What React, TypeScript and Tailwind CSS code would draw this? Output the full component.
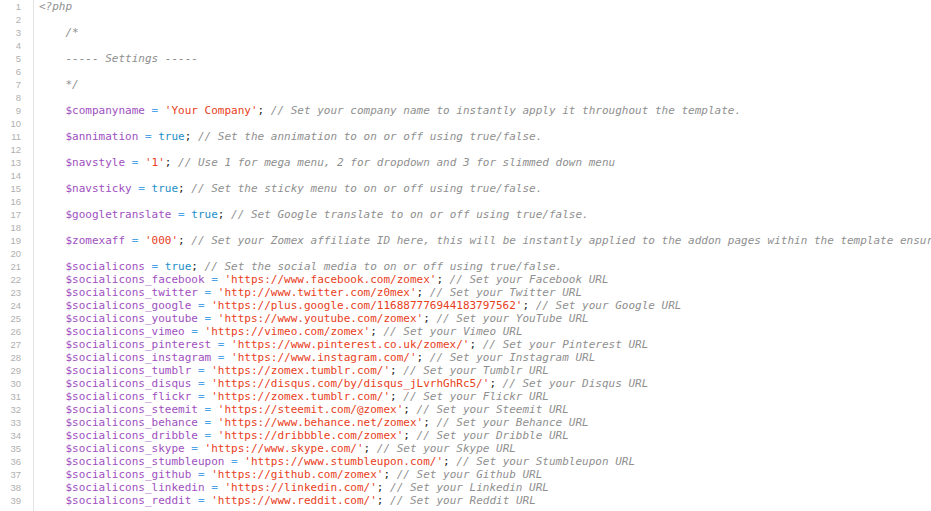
type Line = { v?: string; val?: string; kind?: "str" | "bool"; c?: string; raw?: string; rawComment?: boolean };

const lines: Line[] = [
  { raw: "<?php", rawComment: true },
  {},
  { raw: "    /*", rawComment: true },
  {},
  { raw: "    ----- Settings -----", rawComment: true },
  {},
  { raw: "    */", rawComment: true },
  {},
  { v: "$companyname", val: "'Your Company'", kind: "str", c: "Set your company name to instantly apply it throughout the template." },
  {},
  { v: "$annimation", val: "true", kind: "bool", c: "Set the annimation to on or off using true/false." },
  {},
  { v: "$navstyle", val: "'1'", kind: "str", c: "Use 1 for mega menu, 2 for dropdown and 3 for slimmed down menu" },
  {},
  { v: "$navsticky", val: "true", kind: "bool", c: "Set the sticky menu to on or off using true/false." },
  {},
  { v: "$googletranslate", val: "true", kind: "bool", c: "Set Google translate to on or off using true/false." },
  {},
  { v: "$zomexaff", val: "'000'", kind: "str", c: "Set your Zomex affiliate ID here, this will be instantly applied to the addon pages within the template ensuring you get credited." },
  {},
  { v: "$socialicons", val: "true", kind: "bool", c: "Set the social media to on or off using true/false." },
  { v: "$socialicons_facebook", val: "'https://www.facebook.com/zomex'", kind: "str", c: "Set your Facebook URL" },
  { v: "$socialicons_twitter", val: "'http://www.twitter.com/z0mex'", kind: "str", c: "Set your Twitter URL" },
  { v: "$socialicons_google", val: "'https://plus.google.com/116887776944183797562'", kind: "str", c: "Set your Google URL" },
  { v: "$socialicons_youtube", val: "'https://www.youtube.com/zomex'", kind: "str", c: "Set your YouTube URL" },
  { v: "$socialicons_vimeo", val: "'https://vimeo.com/zomex'", kind: "str", c: "Set your Vimeo URL" },
  { v: "$socialicons_pinterest", val: "'https://www.pinterest.co.uk/zomex/'", kind: "str", c: "Set your Pinterest URL" },
  { v: "$socialicons_instagram", val: "'https://www.instagram.com/'", kind: "str", c: "Set your Instagram URL" },
  { v: "$socialicons_tumblr", val: "'https://zomex.tumblr.com/'", kind: "str", c: "Set your Tumblr URL" },
  { v: "$socialicons_disqus", val: "'https://disqus.com/by/disqus_jLvrhGhRc5/'", kind: "str", c: "Set your Disqus URL" },
  { v: "$socialicons_flickr", val: "'https://zomex.tumblr.com/'", kind: "str", c: "Set your Flickr URL" },
  { v: "$socialicons_steemit", val: "'https://steemit.com/@zomex'", kind: "str", c: "Set your Steemit URL" },
  { v: "$socialicons_behance", val: "'https://www.behance.net/zomex'", kind: "str", c: "Set your Behance URL" },
  { v: "$socialicons_dribble", val: "'https://dribbble.com/zomex'", kind: "str", c: "Set your Dribble URL" },
  { v: "$socialicons_skype", val: "'https://www.skype.com/'", kind: "str", c: "Set your Skype URL" },
  { v: "$socialicons_stumbleupon", val: "'https://www.stumbleupon.com/'", kind: "str", c: "Set your Stumbleupon URL" },
  { v: "$socialicons_github", val: "'https://github.com/zomex'", kind: "str", c: "Set your Github URL" },
  { v: "$socialicons_linkedin", val: "'https://linkedin.com/'", kind: "str", c: "Set your Linkedin URL" },
  { v: "$socialicons_reddit", val: "'https://www.reddit.com/'", kind: "str", c: "Set your Reddit URL" },
];

const CodeLine = ({ line }: { line: Line }) => {
  if (line.raw) {
    return <span className="italic text-[#8f8f8f]">{line.raw}</span>;
  }
  if (!line.v) return <span> </span>;
  return (
    <span>
      {"    "}
      <span className="text-[#a04fc0]">{line.v}</span>
      <span className="text-[#4da3e6]"> = </span>
      <span className={line.kind === "bool" ? "text-[#1c8ec9]" : "text-[#e8401c]"}>{line.val}</span>
      <span className="text-[#222]">;</span>
      <span className="italic text-[#8f8f8f]"> // {line.c}</span>
    </span>
  );
};

const App = () => {
  return (
    <div className="flex h-[511px] w-[931px] overflow-hidden bg-white">
      <div className="w-[34px] shrink-0 border-r border-[#e3e3e3] pr-[12px] text-right font-['Liberation_Sans',sans-serif] text-[9.5px] leading-[13px] text-[#b0b0b0]">
        {lines.map((_, i) => (
          <div key={i} className="h-[13px]">
            {i + 1}
          </div>
        ))}
      </div>
      <div className="min-w-0 flex-1 overflow-hidden pl-[5px] font-['DejaVu_Sans_Mono',monospace] text-[11px] leading-[13px]">
        {lines.map((line, i) => (
          <div key={i} className="h-[13px] whitespace-pre">
            <CodeLine line={line} />
          </div>
        ))}
      </div>
    </div>
  );
};

export default App;
